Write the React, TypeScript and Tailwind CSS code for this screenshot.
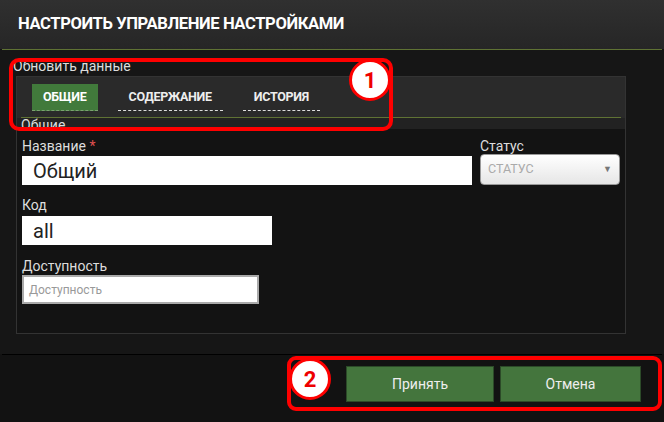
import React from "react";

const tabs = [
  { label: "ОБЩИЕ", active: true },
  { label: "СОДЕРЖАНИЕ", active: false },
  { label: "ИСТОРИЯ", active: false },
];

const Marker: React.FC<{ n: number; className: string }> = ({ n, className }) => (
  <div
    className={`absolute w-[42px] h-[42px] rounded-full bg-white border-[3px] border-[#ff0000] flex items-center justify-center text-[22px] font-bold text-[#ee0000] ${className}`}
  >
    {n}
  </div>
);

export default function App() {
  return (
    <div className="relative w-[664px] h-[422px] overflow-hidden bg-[#121212] font-['Roboto',sans-serif] text-[#ddd]">
      {/* Header */}
      <div className="h-[49px] bg-gradient-to-b from-[#303030] to-[#262626] flex items-center px-[18px]">
        <h1 className="text-[16.6px] font-bold text-white tracking-[-0.4px] font-['Liberation_Sans_Narrow','Roboto',sans-serif]">
          НАСТРОИТЬ УПРАВЛЕНИЕ НАСТРОЙКАМИ
        </h1>
      </div>
      <div className="mx-[2px] h-px bg-[#5f7234]" />

      {/* Body */}
      <div className="bg-[#161616] h-[304px] px-[13px] pt-[9px]">
        <div className="text-[14px] leading-[15px] text-[#ddd] mb-[2px]">Обновить данные</div>

        <div className="ml-[3px] w-[610px] h-[258px] border border-[#333] flex flex-col overflow-hidden">
          {/* Tabs */}
          <div className="bg-[#2a2a2a] h-[40px] flex items-start gap-[20px] pl-[15px] pt-[7px]">
            {tabs.map(t => (
              <div
                key={t.label}
                className={`h-[27px] px-[11px] flex items-center text-[12.5px] font-bold tracking-[-0.3px] border-b border-dashed ${
                  t.active ? "bg-[#417a3b] text-white border-[#7aa070]" : "text-[#eee] border-[#ddd]"
                }`}
              >
                {t.label}
              </div>
            ))}
          </div>
          <div className="bg-[#2a2a2a] px-[4px]">
            <div className="h-px bg-[#5f7234]" />
          </div>
          <div className="bg-[#222] h-[11px] overflow-hidden px-[4px]">
            <div className="text-[14px] leading-[15px] text-[#ddd]">Общие</div>
          </div>

          {/* Form */}
          <div className="flex-1 bg-[#131313] px-[5px] pt-[9px]">
            <div className="flex gap-[8px]">
              <div className="flex-1">
                <div className="text-[14px] leading-[16px] text-[#ddd] mb-[2px]">
                  Название <span className="text-[#e05050]">*</span>
                </div>
                <div className="h-[29px] bg-white flex items-center px-[11px] text-[20px] text-[#222]">Общий</div>
              </div>
              <div className="w-[140px]">
                <div className="text-[14px] leading-[16px] text-[#ddd]">Статус</div>
                <div className="h-[31px] rounded-[4px] border border-[#999] bg-gradient-to-b from-white to-[#e6e6e6] flex items-center justify-between px-[7px] text-[12.5px] text-[#aaa]">
                  <span>СТАТУС</span>
                  <span className="text-[9px] text-[#777]">▼</span>
                </div>
              </div>
            </div>

            <div className="mt-[12px] text-[14px] leading-[16px] text-[#ddd] mb-[3px]">Код</div>
            <div className="w-[250px] h-[29px] bg-white flex items-center px-[11px] text-[20px] text-[#222]">all</div>

            <div className="mt-[13px] text-[14px] leading-[16px] text-[#ddd] mb-[1px]">Доступность</div>
            <div className="w-[237px] h-[29px] bg-white border-2 border-[#aaa] flex items-center px-[5px] text-[12px] text-[#999]">
              Доступность
            </div>
          </div>
        </div>
      </div>

      {/* Footer */}
      <div className="mx-[2px] h-px bg-[#000]" />
      <div className="flex justify-end gap-[6px] pr-[23px] pt-[11px]">
        <button className="w-[148px] h-[36px] bg-[#44753d] border border-[#2c4a28] text-[14px] text-[#eee]">Принять</button>
        <button className="w-[141px] h-[36px] bg-[#44753d] border border-[#2c4a28] text-[14px] text-[#eee]">Отмена</button>
      </div>

      {/* Annotations */}
      <div className="absolute left-[9px] top-[58px] w-[384px] h-[73px] rounded-[10px] border-[4px] border-[#ff0000]" />
      <Marker n={1} className="left-[349px] top-[59px]" />
      <div className="absolute left-[287px] top-[356px] w-[375px] h-[55px] rounded-[9px] border-[4px] border-[#ff0000]" />
      <Marker n={2} className="left-[289px] top-[358px]" />
    </div>
  );
}
